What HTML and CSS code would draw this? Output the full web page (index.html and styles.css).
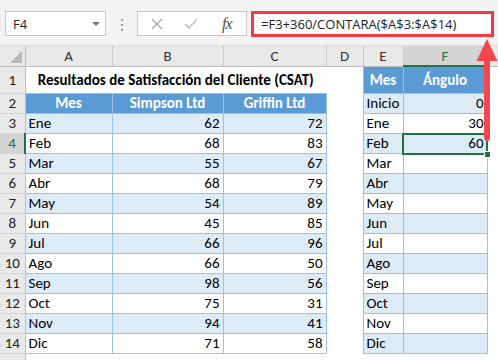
FILE: index.html
```html
<!DOCTYPE html>
<html lang="es">
<head>
    <meta charset="UTF-8">
    <meta name="viewport" content="width=device-width, initial-scale=1.0">
    <title>CONTARA - ángulo</title>
    <link rel="stylesheet" href="styles.css">
</head>
<body>
    <div class="toolbar">
        <div class="name-box">F4<span class="drop"></span></div>
        <div class="dots"><span></span><span></span><span></span></div>
        <div class="fx-box">
            <svg class="ico" width="12" height="12" viewBox="0 0 12 12"><path d="M1 1 L11 11 M11 1 L1 11" stroke="#a8a8a8" stroke-width="1.3" fill="none"/></svg>
            <svg class="ico" width="14" height="12" viewBox="0 0 14 12"><path d="M1 6 L5 10 L13 1" stroke="#c4c4c4" stroke-width="1.8" fill="none"/></svg>
            <i class="fx">fx</i>
        </div>
        <div class="formula">=F3+360/CONTARA($A$3:$A$14)</div>
    </div>

    <div class="sheet">
        <table class="grid">
            <colgroup>
                <col style="width:25px"><col style="width:87px"><col style="width:111px"><col style="width:103px">
                <col style="width:37px"><col style="width:40px"><col style="width:84px"><col style="width:11px">
            </colgroup>
            <tr class="hdr">
                <td class="corner"><span class="tri"></span></td>
                <td class="hd">A</td><td class="hd">B</td><td class="hd">C</td><td class="hd">D</td>
                <td class="hd">E</td><td class="hd sel">F</td><td class="hd last"></td>
            </tr>
            <tr class="r1">
                <td class="rh">1</td>
                <td colspan="3" class="title">Resultados de Satisfacción del Cliente (CSAT)</td>
                <td></td><td class="t th">Mes</td><td class="t th">Ángulo</td><td></td>
            </tr>
            <tr>
                <td class="rh">2</td>
                <td class="t th">Mes</td><td class="t th">Simpson Ltd</td><td class="t th">Griffin Ltd</td>
                <td></td><td class="t band">Inicio</td><td class="t band num">0</td><td></td>
            </tr>
            <tr>
                <td class="rh">3</td>
                <td class="t band">Ene</td><td class="t band num">62</td><td class="t band num">72</td>
                <td></td><td class="t">Ene</td><td class="t num">30</td><td></td>
            </tr>
            <tr>
                <td class="rh sel">4</td>
                <td class="t">Feb</td><td class="t num">68</td><td class="t num">83</td>
                <td></td><td class="t band">Feb</td><td class="t band num">60</td><td></td>
            </tr>
            <tr>
                <td class="rh">5</td>
                <td class="t band">Mar</td><td class="t band num">55</td><td class="t band num">67</td>
                <td></td><td class="t">Mar</td><td class="t"></td><td></td>
            </tr>
            <tr>
                <td class="rh">6</td>
                <td class="t">Abr</td><td class="t num">68</td><td class="t num">79</td>
                <td></td><td class="t band">Abr</td><td class="t band"></td><td></td>
            </tr>
            <tr>
                <td class="rh">7</td>
                <td class="t band">May</td><td class="t band num">54</td><td class="t band num">89</td>
                <td></td><td class="t">May</td><td class="t"></td><td></td>
            </tr>
            <tr>
                <td class="rh">8</td>
                <td class="t">Jun</td><td class="t num">45</td><td class="t num">85</td>
                <td></td><td class="t band">Jun</td><td class="t band"></td><td></td>
            </tr>
            <tr>
                <td class="rh">9</td>
                <td class="t band">Jul</td><td class="t band num">66</td><td class="t band num">96</td>
                <td></td><td class="t">Jul</td><td class="t"></td><td></td>
            </tr>
            <tr>
                <td class="rh">10</td>
                <td class="t">Ago</td><td class="t num">66</td><td class="t num">50</td>
                <td></td><td class="t band">Ago</td><td class="t band"></td><td></td>
            </tr>
            <tr>
                <td class="rh">11</td>
                <td class="t band">Sep</td><td class="t band num">98</td><td class="t band num">56</td>
                <td></td><td class="t">Sep</td><td class="t"></td><td></td>
            </tr>
            <tr>
                <td class="rh">12</td>
                <td class="t">Oct</td><td class="t num">75</td><td class="t num">31</td>
                <td></td><td class="t band">Oct</td><td class="t band"></td><td></td>
            </tr>
            <tr>
                <td class="rh">13</td>
                <td class="t band">Nov</td><td class="t band num">94</td><td class="t band num">41</td>
                <td></td><td class="t">Nov</td><td class="t"></td><td></td>
            </tr>
            <tr>
                <td class="rh">14</td>
                <td class="t">Dic</td><td class="t num">71</td><td class="t num">58</td>
                <td></td><td class="t band">Dic</td><td class="t band"></td><td></td>
            </tr>
            <!-- fila 15, solo asoma el borde -->
            <tr>
                <td class="rh"></td>
                <td></td><td></td><td></td><td></td><td></td><td></td><td></td>
            </tr>
        </table>

        <!-- celda activa F4 -->
        <div class="active"><span class="handle"></span></div>
    </div>

    <!-- flecha roja hacia la barra de fórmulas -->
    <svg class="arrow" width="24" height="106" viewBox="0 0 24 106">
        <path d="M11 0 L0.5 22 L21.5 22 Z" fill="#f4474d"/>
        <path d="M11 18 L11 99" stroke="#f4474d" stroke-width="6" stroke-linecap="round"/>
    </svg>
</body>
</html>
```

FILE: styles.css
```css
* { box-sizing: border-box; }
body {
    margin: 0;
    width: 498px;
    height: 360px;
    overflow: hidden;
    background: #fff;
    font-family: Carlito, Calibri, Lato, sans-serif;
    position: relative;
}

/* barra de fórmulas */
.toolbar { height: 46px; background: #f3f3f3; display: flex; align-items: flex-start; padding: 11px 0 0 5px; border-bottom: 1px solid #dadada; }
.name-box { width: 101px; height: 25px; background: #fff; border: 1px solid #c9c9c9; font-family: "Open Sans", "Noto Sans", sans-serif; font-size: 13px; color: #222; padding: 3px 0 0 7px; position: relative; }
.drop { position: absolute; right: 5px; top: 10px; border-left: 4px solid transparent; border-right: 4px solid transparent; border-top: 4px solid #777; }
.dots { width: 31px; display: flex; flex-direction: column; align-items: center; gap: 3px; padding-top: 8px; }
.dots span { width: 2px; height: 2px; background: #9a9a9a; }
.fx-box { width: 110px; height: 25px; background: #fff; border: 1px solid #c9c9c9; display: flex; align-items: center; padding-left: 13px; gap: 0; }
.fx-box .ico:first-child { margin-right: 21px; }
.fx-box .ico + .ico { margin-right: 24px; }
.fx { font-family: "Liberation Serif", serif; font-size: 16px; color: #505050; letter-spacing: -1px; }
.formula { width: 243px; height: 26px; margin-left: 4px; background: #fff; border: 3px solid #f3393d; font-family: "Open Sans", "Noto Sans", sans-serif; font-size: 13px; color: #222; padding: 1px 0 0 7px; white-space: nowrap; }

/* hoja */
.sheet { position: relative; }
.grid { border-collapse: collapse; table-layout: fixed; width: 498px; font-size: 15px; color: #000; }
.grid td { height: 20px; padding: 0 3px; white-space: nowrap; overflow: hidden; line-height: 18px; }
.grid .r1 td { height: 27px; }
.hdr td { height: 20px; }
.hd { background: #e9e9e9; color: #333; text-align: center; border-right: 1px solid #cacaca; border-bottom: 1px solid #bdbdbd; }
.hd.last { border-right: none; }
.hd.sel { background: #d4d4d4; color: #217346; border-bottom: 2px solid #217346; }
.corner { background: #e9e9e9; border-right: 1px solid #bdbdbd; border-bottom: 1px solid #bdbdbd; position: relative; }
.tri { position: absolute; right: 3px; bottom: 3px; border-left: 12px solid transparent; border-bottom: 12px solid #b8b8b8; }
.rh { background: #e9e9e9; color: #222; text-align: center; border-right: 1px solid #bdbdbd; border-bottom: 1px solid #d4d4d4; }
.rh.sel { background: #d4d4d4; color: #217346; border-right: 2px solid #217346; }
.title { font-weight: bold; text-align: center; }

/* tablas */
.t { border: 1px solid #9bc2e6; }
.th { background: #5b9bd5; color: #fff; font-weight: bold; text-align: center; }
.band { background: #ddebf7; }
.num { text-align: right; }

/* celda activa */
.active { position: absolute; left: 402px; top: 87px; width: 86px; height: 22px; border: 2px solid #217346; }
.handle { position: absolute; right: -5px; bottom: -5px; width: 7px; height: 7px; background: #217346; border: 1px solid #fff; }

.arrow { position: absolute; left: 476px; top: 39px; }
```
